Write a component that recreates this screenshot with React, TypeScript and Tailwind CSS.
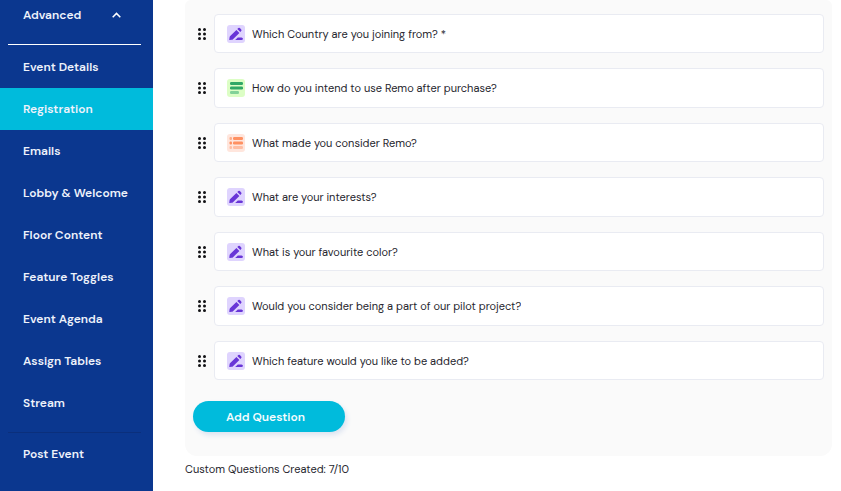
import React from "react";

type QuestionKind = "text" | "paragraph" | "list";

const navItems: string[] = [
  "Event Details",
  "Registration",
  "Emails",
  "Lobby & Welcome",
  "Floor Content",
  "Feature Toggles",
  "Event Agenda",
  "Assign Tables",
  "Stream",
];

const questions: { kind: QuestionKind; label: string }[] = [
  { kind: "text", label: "Which Country are you joining from? *" },
  { kind: "paragraph", label: "How do you intend to use Remo after purchase?" },
  { kind: "list", label: "What made you consider Remo?" },
  { kind: "text", label: "What are your interests?" },
  { kind: "text", label: "What is your favourite color?" },
  { kind: "text", label: "Would you consider being a part of our pilot project?" },
  { kind: "text", label: "Which feature would you like to be added?" },
];

function DragDots() {
  return (
    <svg width="8" height="12" viewBox="0 0 8 12" fill="#111114" aria-hidden="true">
      {[1.5, 6, 10.5].map((y) => (
        <g key={y}>
          <circle cx="1.5" cy={y} r="1.5" />
          <circle cx="6.5" cy={y} r="1.5" />
        </g>
      ))}
    </svg>
  );
}

function KindIcon({ kind }: { kind: QuestionKind }) {
  if (kind === "paragraph") {
    return (
      <svg className="shrink-0" width="18" height="18" viewBox="0 0 18 18" aria-hidden="true">
        <rect width="18" height="18" rx="3" fill="#dcfec5" />
        <rect x="3" y="3" width="13" height="3" rx="1.2" fill="#2fa866" />
        <rect x="3" y="7.5" width="13" height="3" rx="1.2" fill="#2fa866" />
        <rect x="3" y="12" width="9" height="3" rx="1.2" fill="#82d298" />
      </svg>
    );
  }
  if (kind === "list") {
    return (
      <svg className="shrink-0" width="18" height="18" viewBox="0 0 18 18" aria-hidden="true">
        <rect width="18" height="18" rx="3" fill="#ffe6dd" />
        <g fill="#ff9162">
          <rect x="2.5" y="3" width="2.5" height="3" rx="1" fill="#ffad8a" />
          <rect x="6" y="3" width="10" height="3" rx="1.2" />
          <rect x="2.5" y="7.5" width="2.5" height="3" rx="1" />
          <rect x="6" y="7.5" width="10" height="3" rx="1.2" />
        </g>
        <g fill="#ffbea3">
          <rect x="2.5" y="12" width="2.5" height="3" rx="1" />
          <rect x="6" y="12" width="10" height="3" rx="1.2" />
        </g>
      </svg>
    );
  }
  return (
    <svg className="shrink-0" width="18" height="18" viewBox="0 0 18 18" aria-hidden="true">
      <rect width="18" height="18" rx="3" fill="#dfd4fe" />
      <g fill="#6835d7">
        <path d="M9.4 4.9 12.4 7.9 6 14.2Q5.5 14.7 4.8 14.8L2.7 15Q2.2 15 2.3 14.4L2.6 12.3Q2.7 11.6 3.2 11.1Z" />
        <path d="M10.3 4 11.3 3.1Q12.1 2.4 12.9 3.1L14.2 4.4Q14.9 5.2 14.2 6L13.3 7Z" />
        <path d="M8.2 15 10.8 12.4H14.5Q15.9 12.5 15.9 13.7T14.5 15Z" />
      </g>
    </svg>
  );
}

export default function App() {
  return (
    <div className="flex h-screen overflow-hidden bg-white font-['DM_Sans','Open_Sans',sans-serif]">
      <nav className="w-[153px] shrink-0 bg-[#0b378f] text-[12px] leading-[18px] font-semibold text-[#eef2fb]">
        <button type="button" className="flex h-[30px] w-full items-center justify-between pr-8 pl-[23px]">
          Advanced
          <svg width="9" height="6" viewBox="0 0 9 6" fill="none" stroke="#fff" strokeWidth="1.5" aria-hidden="true">
            <path d="M0.7 5.2 4.5 1.4 8.3 5.2" />
          </svg>
        </button>
        <hr className="mt-3.5 mr-3 mb-px ml-2 border-white" />
        {navItems.map((item) => (
          <a
            key={item}
            href="#"
            aria-current={item === "Registration" ? "page" : undefined}
            className="flex h-[42px] items-center pl-[23px] whitespace-nowrap aria-[current=page]:bg-[#00bbdc]"
          >
            {item}
          </a>
        ))}
        <hr className="mt-2 mr-3 ml-2 border-[#0b2f7c]" />
        <a href="#" className="flex h-[42px] items-center pl-[23px] whitespace-nowrap">
          Post Event
        </a>
      </nav>

      <main className="min-w-0 grow pr-[9px] pl-8 text-[11px] leading-4 text-[#26262e]">
        <section className="rounded-xl rounded-t-md bg-[#fafafa] px-2 pt-3.5 pb-6">
          <ul className="flex flex-col gap-[15px]">
            {questions.map((q) => (
              <li key={q.label} className="flex h-[39px] items-center even:h-10">
                <button type="button" aria-label="Reorder question" className="flex w-[21px] shrink-0 pl-[5px]">
                  <DragDots />
                </button>
                <div className="flex h-full min-w-0 grow items-center gap-[7px] rounded border border-[#e9ebf2] bg-white px-3">
                  <KindIcon kind={q.kind} />
                  <span className="truncate">{q.label}</span>
                </div>
              </li>
            ))}
          </ul>
          <button
            type="button"
            className="mt-[21px] flex h-[31px] items-center rounded-full bg-[#00bbdc] pr-10 pl-[33px] text-[12px] font-semibold whitespace-nowrap text-[#f4fcfe] shadow-[2px_3px_5px_#dbe3f0]"
          >
            Add Question
          </button>
        </section>
        <p className="mt-[5px]">Custom Questions Created: 7/10</p>
      </main>
    </div>
  );
}
